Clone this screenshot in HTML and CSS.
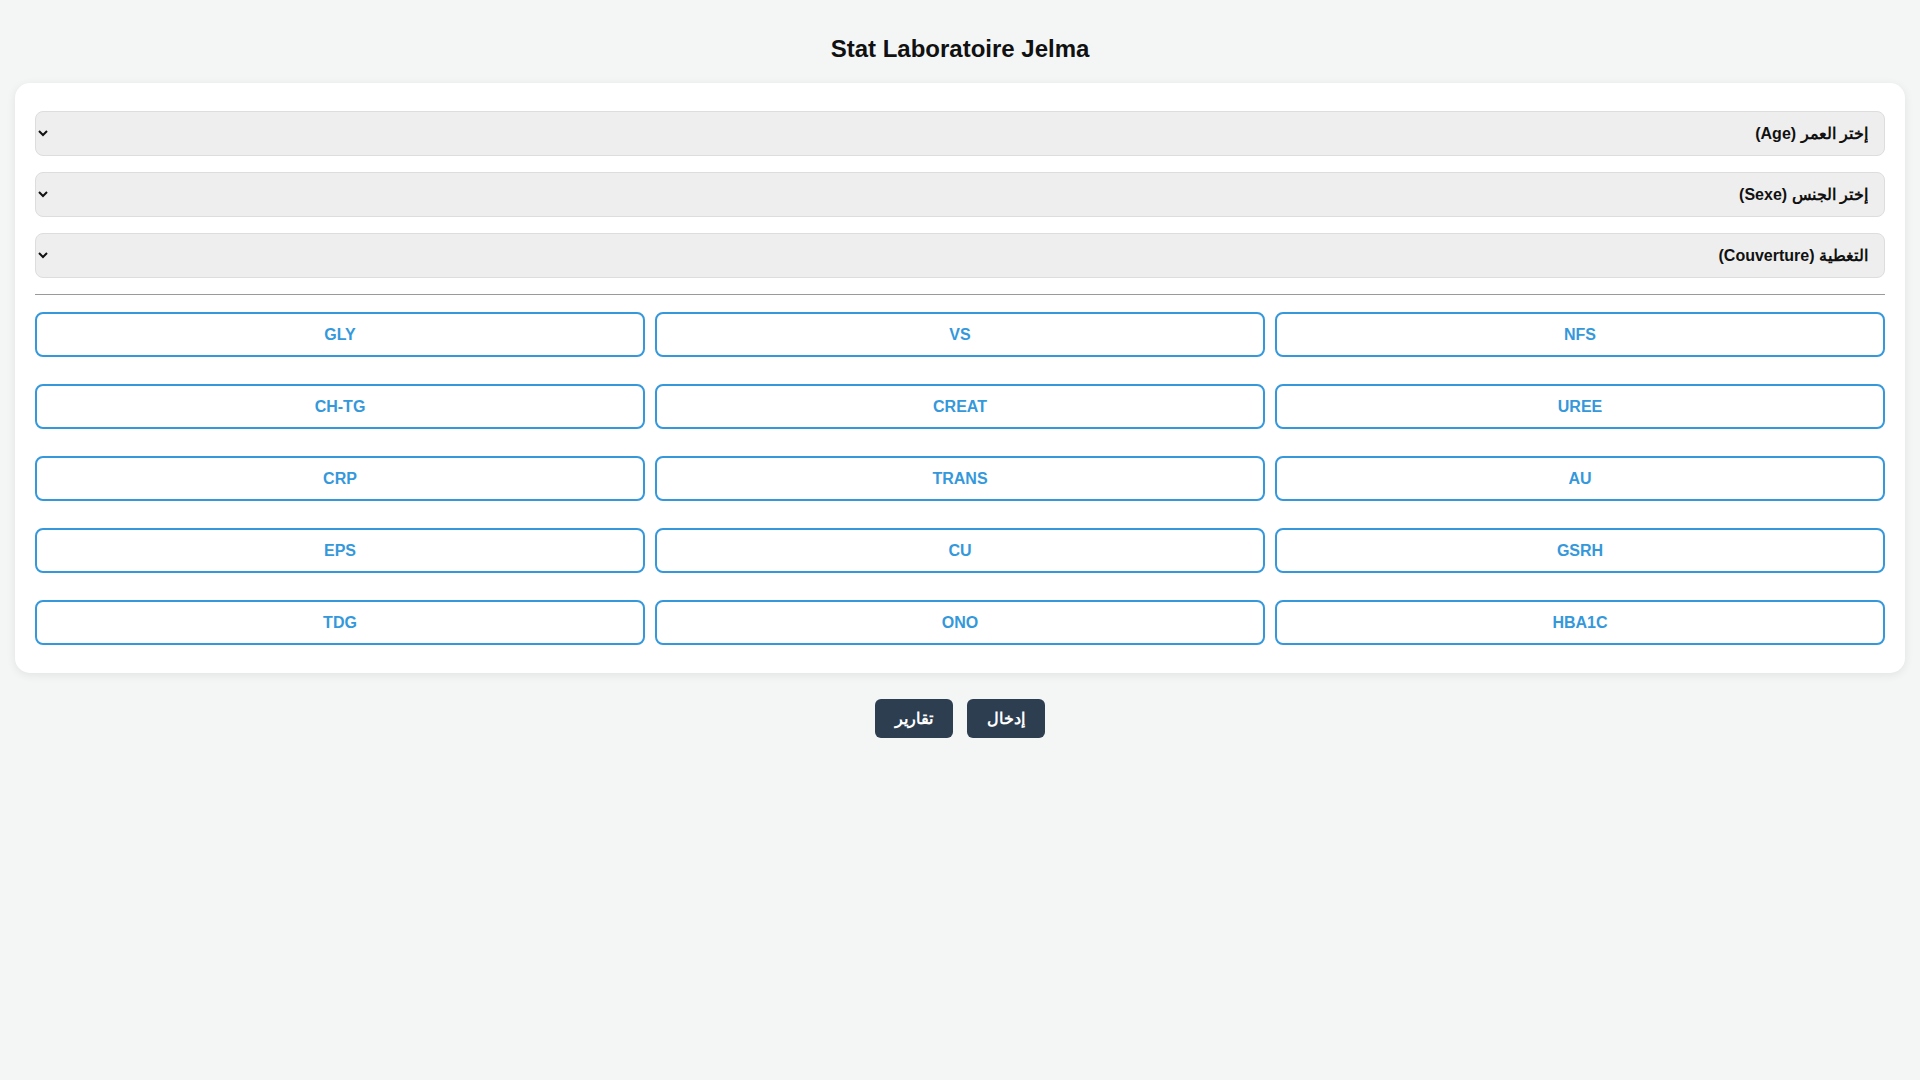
FILE: index.html
```html
<!DOCTYPE html>
<html lang="ar" dir="rtl">
<head>
<meta charset="utf-8">
<title>Stat Laboratoire Jelma</title>
<link rel="stylesheet" href="styles.css">
</head>
<body>
<div class="page">
  <h1 class="title">Stat Laboratoire Jelma</h1>
  <div class="card">
    <div class="filters">
      <select class="filter"><option>إختر العمر (Age)</option></select>
      <select class="filter"><option>إختر الجنس (Sexe)</option></select>
      <select class="filter"><option>التغطية (Couverture)</option></select>
    </div>
    <hr class="divider">
    <div class="tests">
      <button class="test">NFS</button>
      <button class="test">VS</button>
      <button class="test">GLY</button>
      <button class="test">UREE</button>
      <button class="test">CREAT</button>
      <button class="test">CH-TG</button>
      <button class="test">AU</button>
      <button class="test">TRANS</button>
      <button class="test">CRP</button>
      <button class="test">GSRH</button>
      <button class="test">CU</button>
      <button class="test">EPS</button>
      <button class="test">HBA1C</button>
      <button class="test">ONO</button>
      <button class="test">TDG</button>
    </div>
  </div>
  <div class="actions">
    <button class="action">إدخال</button>
    <button class="action">تقارير</button>
  </div>
</div>
</body>
</html>
```
FILE: styles.css
```css
html, body {
  margin: 0;
  padding: 0;
  background: #f4f6f6;
  font-family: "Liberation Sans", Arial, sans-serif;
  color: #111;
}

.page {
  padding: 35px 15px 20px;
}

.title {
  margin: 0 0 20px;
  font-size: 24px;
  line-height: 28px;
  font-weight: bold;
  text-align: center;
  color: #111;
}

.card {
  background: #fff;
  border-radius: 15px;
  box-shadow: 0 2px 10px rgba(0, 0, 0, 0.08);
  padding: 28px 20px 28px;
}

.filters {
  display: flex;
  flex-direction: column;
  gap: 16px;
}

.filter {
  height: 45px;
  width: 100%;
  box-sizing: border-box;
  background-color: #eeeeee;
  border: 1px solid #dddddd;
  border-radius: 8px;
  padding: 0 12px;
  font-family: "Liberation Sans", Arial, sans-serif;
  font-size: 16px;
  font-weight: bold;
  color: #111;
}

.divider {
  margin: 16px 0 17px;
  border: none;
  border-top: 1px solid #9a9a9a;
  height: 0;
}

.tests {
  display: grid;
  grid-template-columns: repeat(3, 1fr);
  column-gap: 10px;
  row-gap: 27px;
}

.test {
  height: 45px;
  background: #fff;
  border: 2px solid #3498db;
  border-radius: 8px;
  color: #3498db;
  font-family: "Liberation Sans", Arial, sans-serif;
  font-size: 16px;
  font-weight: bold;
  cursor: pointer;
}

.actions {
  display: flex;
  justify-content: center;
  gap: 14px;
  margin-top: 26px;
}

.action {
  height: 39px;
  min-width: 77px;
  padding: 0 20px;
  background: #2c3e50;
  color: #fff;
  border: none;
  border-radius: 6px;
  font-family: "Liberation Sans", Arial, sans-serif;
  font-size: 16px;
  font-weight: bold;
}
```
